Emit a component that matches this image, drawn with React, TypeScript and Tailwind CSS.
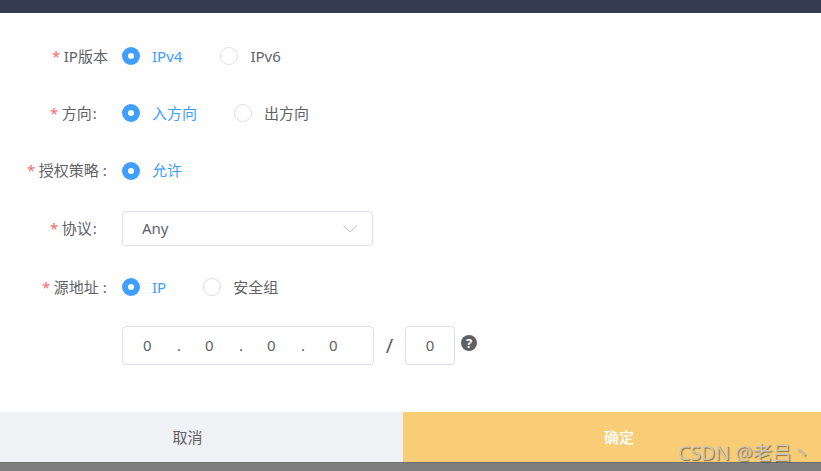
const FONT = "font-['Noto_Sans','Noto_Sans_CJK_SC',sans-serif]";

function Label({ text, left, colon }: { text: string; left: string; colon?: string }) {
  return (
    <div className={`w-[122px] shrink-0 whitespace-nowrap text-[15px] text-[#606266] ${left}`}>
      <span className="mr-[3.5px] text-[#f56c6c]">*</span>
      {text}
      {colon && <span className={colon}>:</span>}
    </div>
  );
}

function Radio({ label, checked, className = "" }: { label: string; checked?: boolean; className?: string }) {
  return (
    <label className={`flex items-center ${className}`}>
      {checked ? (
        <span className="flex h-[18px] w-[18px] items-center justify-center rounded-full bg-[#409eff]">
          <span className="h-[6px] w-[6px] rounded-full bg-white" />
        </span>
      ) : (
        <span className="h-[18px] w-[18px] rounded-full border border-[#dcdfe6] bg-white" />
      )}
      <span className={`ml-[12px] text-[15px] ${checked ? "text-[#409eff]" : "text-[#606266]"}`}>{label}</span>
    </label>
  );
}

export default function App() {
  return (
    <div className={`relative flex h-[471px] w-[821px] flex-col overflow-hidden bg-white ${FONT}`}>
      <div className="h-[13px] bg-[#333c51]" />

      <div className="flex-1 pt-[14px]">
        <div className="flex h-[58px] items-center">
          <Label text="IP版本" left="pl-[52px]" />
          <Radio label="IPv4" checked />
          <Radio label="IPv6" className="ml-[38px]" />
        </div>
        <div className="flex h-[56px] items-center">
          <Label text="方向" left="pl-[50px]" colon="ml-[1px]" />
          <Radio label="入方向" checked />
          <Radio label="出方向" className="ml-[37px]" />
        </div>
        <div className="flex h-[59px] items-center">
          <Label text="授权策略" left="pl-[27px]" colon="ml-[4px]" />
          <Radio label="允许" checked />
        </div>
        <div className="flex h-[57px] items-center">
          <Label text="协议" left="pl-[50px]" colon="ml-[1px]" />
          <div className="flex h-[35px] w-[251px] items-center justify-between rounded-[4px] border border-[#dcdfe6] pl-[19px] pr-[15px] text-[15px] text-[#606266]">
            <span>Any</span>
            <svg width="14" height="8" viewBox="0 0 14 8" fill="none" stroke="#c0c4cc" strokeWidth="1">
              <path d="M0.5 0.5 L7 7 L13.5 0.5" />
            </svg>
          </div>
        </div>
        <div className="flex h-[60px] items-center">
          <Label text="源地址" left="pl-[42px]" colon="ml-[4px]" />
          <Radio label="IP" checked />
          <Radio label="安全组" className="ml-[37px]" />
        </div>
        <div className="flex h-[57px] items-center pl-[122px]">
          <div className="flex h-[39px] w-[252px] items-center rounded-[4px] border border-[#dcdfe6] pl-[20px] text-[15px] text-[#606266]">
            {["0", ".", "0", ".", "0", ".", "0"].map((c, i) => (
              <span key={i} className={c === "." ? "w-[31px] pl-[3px]" : "w-[31px]"}>{c}</span>
            ))}
          </div>
          <span className="w-[31px] text-center text-[20px] text-[#606266]">/</span>
          <div className="flex h-[39px] w-[50px] items-center justify-center rounded-[4px] border border-[#dcdfe6] text-[15px] text-[#606266]">0</div>
          <span className="ml-[6px] mt-[18px] flex h-[16px] w-[16px] items-center justify-center self-start rounded-full bg-[#5f6063] text-[13px] font-bold leading-none text-white">?</span>
        </div>
      </div>

      <div className="flex h-[50px] text-[15px]">
        <div className="flex w-[403px] items-center justify-center bg-[#f0f1f5] pr-[28px] text-[#606266]">取消</div>
        <div className="flex flex-1 items-center justify-center bg-[#f8cd76] pl-[14px] font-medium text-white">确定</div>
      </div>
      <div className="h-[9px] border-t border-[#6f6f6f] bg-[#7f7f7f]" />

      <div className="absolute left-[678px] top-[439px] text-[19.5px] leading-[27px] text-[#cbc6b6] [text-shadow:1px_1px_1px_rgba(0,0,0,0.45)]">CSDN @老吕丶</div>
    </div>
  );
}
